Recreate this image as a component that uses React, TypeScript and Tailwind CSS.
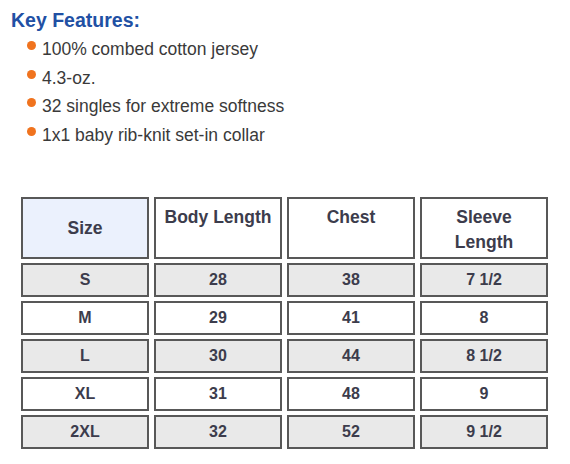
import React from "react";

const features = [
    "100% combed cotton jersey",
    "4.3-oz.",
    "32 singles for extreme softness",
    "1x1 baby rib-knit set-in collar",
];

const rows = [
    { size: "S", body: "28", chest: "38", sleeve: "7 1/2" },
    { size: "M", body: "29", chest: "41", sleeve: "8" },
    { size: "L", body: "30", chest: "44", sleeve: "8 1/2" },
    { size: "XL", body: "31", chest: "48", sleeve: "9" },
    { size: "2XL", body: "32", chest: "52", sleeve: "9 1/2" },
];

const cell = "border-2 border-[#585858] flex items-center justify-center";
const head = "border-2 border-[#585858] h-[62px] text-[17.5px] text-center leading-[25px] pt-[6px]";

export default function App() {
    return (
        <div className="w-[570px] h-[464px] bg-white font-['Liberation_Sans',Arial,sans-serif] overflow-hidden">
            <div className="pl-[11px] pt-[8px]">
                <h2 className="text-[19.5px] leading-[24px] font-bold text-[#2150a4]">Key Features:</h2>
                <ul className="pl-[16px] pt-[3px]">
                    {features.map((f) => (
                        <li key={f} className="flex items-center h-[28.5px] text-[17.5px] text-[#3a3a3a]">
                            <span className="w-[9px] h-[9px] rounded-full bg-[#f0731e] mr-[6px] -mt-[7px]" />
                            {f}
                        </li>
                    ))}
                </ul>
            </div>

            <div className="ml-[21px] mt-[48px] grid grid-cols-[128px_128px_128px_128px] gap-x-[5px] gap-y-[4px] text-[#3c3c4c] font-bold">
                <div className={`${cell} h-[62px] bg-[#ebf1fd] text-[17.5px]`}>Size</div>
                <div className={head}>Body Length</div>
                <div className={head}>Chest</div>
                <div className={head}>
                    Sleeve
                    <br />
                    Length
                </div>
                {rows.map((r, i) => {
                    const bg = i % 2 === 0 ? "bg-[#e9e9e9]" : "bg-white";
                    return (
                        <React.Fragment key={r.size}>
                            <div className={`${cell} ${bg} h-[34px] text-[16px]`}>{r.size}</div>
                            <div className={`${cell} ${bg} h-[34px] text-[16px]`}>{r.body}</div>
                            <div className={`${cell} ${bg} h-[34px] text-[16px]`}>{r.chest}</div>
                            <div className={`${cell} ${bg} h-[34px] text-[16px]`}>{r.sleeve}</div>
                        </React.Fragment>
                    );
                })}
            </div>
        </div>
    );
}
